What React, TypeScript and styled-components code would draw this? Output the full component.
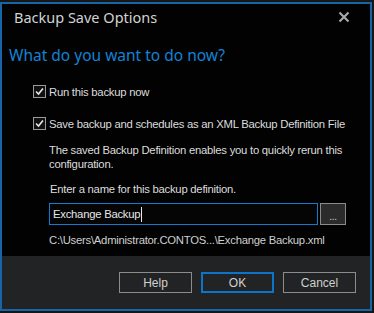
import React from 'react'
import styled, { createGlobalStyle } from 'styled-components'

const GlobalStyle = createGlobalStyle`
  html, body {
    margin: 0;
    padding: 0;
    background: #161616;
    font-family: "Noto Sans", "Open Sans", sans-serif;
  }
`

const Screen = styled.div`
  display: flex;
  width: 374px;
  height: 313px;
  padding-top: 2px;
  box-sizing: border-box;
`

const Window = styled.div`
  display: flex;
  flex-direction: column;
  width: 372px;
  height: 309px;
  box-sizing: border-box;
  border: 2px solid #1565a8;
  background: #020202;
`

const TitleBar = styled.div`
  display: flex;
  align-items: center;
  justify-content: space-between;
  height: 25px;
  padding: 0 20px 0 12px;
`

const Title = styled.span`
  color: #d2d2d2;
  font-size: 14.5px;
`

const CloseButton = styled.div`
  width: 12px;
  height: 12px;
  display: flex;
  align-items: center;
  justify-content: center;
`

const Body = styled.div`
  display: flex;
  flex-direction: column;
  padding: 15px 0 0 7px;
`

const Heading = styled.div`
  color: #1283d6;
  font-size: 15.5px;
  margin-bottom: 18px;
`

const Options = styled.div`
  display: flex;
  flex-direction: column;
  padding-left: 24px;
  color: #dcdcdc;
  font-family: "Liberation Sans", Arial, sans-serif;
  font-size: 11.3px;
  letter-spacing: -0.25px;
`

const CheckRow = styled.label<{ gap?: number }>`
  display: flex;
  align-items: center;
  gap: 3px;
  height: 15px;
  white-space: nowrap;
  margin-bottom: ${(p) => p.gap ?? 0}px;
`

const Box = styled.span`
  width: 11px;
  height: 11px;
  border: 1px solid #9a9a9a;
  background: #101010;
  display: flex;
  align-items: center;
  justify-content: center;
`

const Detail = styled.div`
  padding-left: 16px;
  display: flex;
  flex-direction: column;
`

const Paragraph = styled.p`
  margin: 0;
  line-height: 14px;
  white-space: nowrap;
`

const Prompt = styled.div`
  margin: 12px 0 8px 1px;
`

const InputRow = styled.div`
  display: flex;
  gap: 2px;
  height: 22px;
`

const NameInput = styled.div`
  width: 269px;
  box-sizing: border-box;
  border: 1px solid #1479cf;
  background: #050505;
  display: flex;
  align-items: center;
  padding-left: 3px;
  color: #e6e6e6;
`

const Caret = styled.span`
  display: inline-block;
  width: 1px;
  height: 15px;
  background: #e6e6e6;
  margin-left: 1px;
`

const BrowseButton = styled.div`
  width: 26px;
  box-sizing: border-box;
  border: 1px solid #8a8a8a;
  background: #2b2b2b;
  color: #cfcfcf;
  font-size: 10px;
  display: flex;
  align-items: center;
  justify-content: center;
  padding-top: 4px;
`

const PathText = styled.div`
  margin-top: 9px;
  color: #cfcfcf;
`

const Footer = styled.div`
  margin-top: auto;
  height: 53px;
  background: #222324;
  display: flex;
  justify-content: flex-end;
  align-items: center;
  gap: 9px;
  padding: 0 14px 0 0;
`

const DialogButton = styled.div<{ primary?: boolean }>`
  width: 73px;
  height: 21px;
  box-sizing: border-box;
  border: ${(p) => (p.primary ? '2px solid #0c74c9' : '1px solid #8c8c8c')};
  color: #d0d0d0;
  font-family: "Liberation Sans", Arial, sans-serif;
  font-size: 12px;
  display: flex;
  align-items: center;
  justify-content: center;
`

function Check() {
  return (
    <Box>
      <svg width="9" height="9" viewBox="0 0 9 9">
        <path d="M1 4.5 L3.5 7 L8 1.5" stroke="#e8e8e8" strokeWidth="1.6" fill="none" />
      </svg>
    </Box>
  )
}

export default function App() {
  return (
    <>
      <GlobalStyle />
      <Screen>
        <Window>
          <TitleBar>
            <Title>Backup Save Options</Title>
            <CloseButton>
              <svg width="12" height="12" viewBox="0 0 12 12">
                <path d="M1.5 1.5 L10.5 10.5 M10.5 1.5 L1.5 10.5" stroke="#a8a8a8" strokeWidth="2.2" />
              </svg>
            </CloseButton>
          </TitleBar>
          <Body>
            <Heading>What do you want to do now?</Heading>
            <Options>
              <CheckRow gap={17}>
                <Check />
                Run this backup now
              </CheckRow>
              <CheckRow gap={12}>
                <Check />
                Save backup and schedules as an XML Backup Definition File
              </CheckRow>
              <Detail>
                <Paragraph>
                  The saved Backup Definition enables you to quickly rerun this
                  <br />
                  configuration.
                </Paragraph>
                <Prompt>Enter a name for this backup definition.</Prompt>
                <InputRow>
                  <NameInput>
                    Exchange Backup<Caret />
                  </NameInput>
                  <BrowseButton>...</BrowseButton>
                </InputRow>
                <PathText>C:\Users\Administrator.CONTOS...\Exchange Backup.xml</PathText>
              </Detail>
            </Options>
          </Body>
          <Footer>
            <DialogButton>Help</DialogButton>
            <DialogButton primary>OK</DialogButton>
            <DialogButton>Cancel</DialogButton>
          </Footer>
        </Window>
      </Screen>
    </>
  )
}
